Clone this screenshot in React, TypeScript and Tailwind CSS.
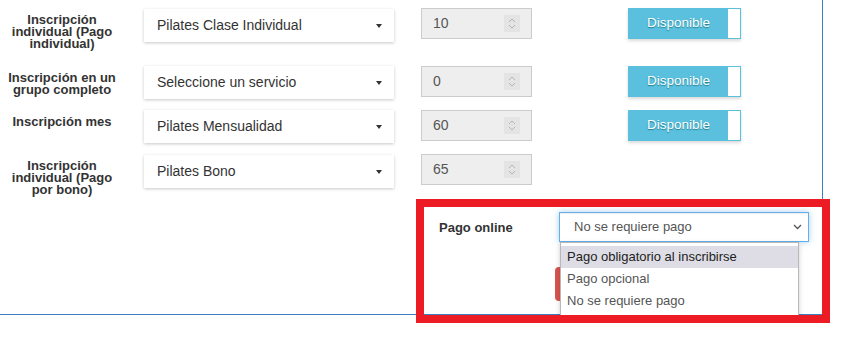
import React from "react";

interface ServiceRow {
    label: string[];
    service: string;
    price: string;
    available: boolean;
    rowClass: string;
    selectClass: string;
}

const rows: ServiceRow[] = [
    {
        label: ["Inscripción", "individual (Pago", "individual)"],
        service: "Pilates Clase Individual",
        price: "10",
        available: true,
        rowClass: "h-[66px] pt-[8px]",
        selectClass: "mt-[1px]",
    },
    {
        label: ["Inscripción en un", "grupo completo"],
        service: "Seleccione un servicio",
        price: "0",
        available: true,
        rowClass: "h-[44px]",
        selectClass: "mt-0",
    },
    {
        label: ["Inscripción mes"],
        service: "Pilates Mensualidad",
        price: "60",
        available: true,
        rowClass: "h-[44px]",
        selectClass: "mt-0",
    },
    {
        label: ["Inscripción", "individual (Pago", "por bono)"],
        service: "Pilates Bono",
        price: "65",
        available: false,
        rowClass: "h-[58px]",
        selectClass: "mt-[1px]",
    },
];

const paymentOptions = [
    "Pago obligatorio al inscribirse",
    "Pago opcional",
    "No se requiere pago",
];

const Spinner = () => (
    <div className="flex h-[17px] w-[16px] items-center justify-center bg-[#e4e4e4]">
        <svg width="8" height="13" viewBox="0 0 8 13" fill="none" stroke="#b5b5b5" strokeWidth="1">
            <polyline points="1,5 4,2 7,5" />
            <polyline points="1,8 4,11 7,8" />
        </svg>
    </div>
);

const AvailabilityToggle: React.FC<{ on: boolean }> = ({ on }) => {
    if (!on) {
        return null;
    }
    return (
        <div className="ml-[96px] flex h-[31px] w-[113px] border border-[#5bc0de] bg-white shadow-[0_2px_3px_rgba(0,0,0,0.15)]">
            <div className="flex w-[99px] items-center justify-center bg-[#5bc0de] text-[13.5px] text-white [text-shadow:0_1px_1px_rgba(20,110,130,0.8)]">
                Disponible
            </div>
            <div className="flex-1 bg-white" />
        </div>
    );
};

export default function App() {
    return (
        <div className="relative h-[339px] w-[844px] bg-white font-['Liberation_Sans',Arial,sans-serif] text-[#333]">
            <div className="relative h-[315px] w-[823px] border-b border-r border-[#3a7fc0]">
                {rows.map((row) => (
                    <div key={row.service} className={`flex items-start ${row.rowClass}`}>
                        <div className="w-[124px] pt-[6px] text-center text-[13px] font-bold leading-[12px] text-[#333]">
                            {row.label.map((line) => (
                                <div key={line}>{line}</div>
                            ))}
                        </div>
                        <div
                            className={`ml-[20px] flex h-[33px] w-[250px] items-center justify-between bg-white pl-[13px] pr-[12px] text-[14px] text-[#333] shadow-[0_1px_3px_rgba(0,0,0,0.22)] ${row.selectClass}`}
                        >
                            <span>{row.service}</span>
                            <span className="border-x-[3.5px] border-t-[4px] border-x-transparent border-t-[#333]" />
                        </div>
                        <div className="ml-[27px] flex h-[31px] w-[111px] items-center justify-between border border-[#cccccc] bg-[#eeeeee] pl-[11px] pr-[11px] text-[14px] text-[#555]">
                            <span>{row.price}</span>
                            <Spinner />
                        </div>
                        <AvailabilityToggle on={row.available} />
                    </div>
                ))}

                <div className="flex items-start pl-[439px]">
                    <div className="w-[120px] pt-[6px] text-[13px] font-bold text-[#333]">
                        Pago online
                    </div>
                    <div className="relative">
                        <div className="flex h-[30px] w-[250px] items-center justify-between border border-[#66afe9] bg-white pl-[14px] pr-[6px] text-[13px] text-[#555] shadow-[inset_0_1px_1px_rgba(0,0,0,0.075),0_0_6px_rgba(102,175,233,0.6)]">
                            <span>No se requiere pago</span>
                            <svg width="9" height="6" viewBox="0 0 9 6" fill="none" stroke="#555" strokeWidth="1.3">
                                <polyline points="1,1 4.5,4.5 8,1" />
                            </svg>
                        </div>
                        <div className="ml-[-4px] mt-[25px] h-[34px] w-[90px] rounded-sm bg-[#d9534f]" />
                        <div className="absolute left-[1px] top-[30px] z-10 h-[74px] w-[239px] border border-[#b8b8b8] bg-white pt-[3px] text-[13px] shadow-[0_2px_5px_rgba(0,0,0,0.2)]">
                            {paymentOptions.map((opt, i) => (
                                <div
                                    key={opt}
                                    className={
                                        i === 0
                                            ? "flex h-[22px] items-center bg-[#dedde5] pl-[6px] text-[#222]"
                                            : "flex h-[22px] items-center pl-[6px] text-[#555]"
                                    }
                                >
                                    {opt}
                                </div>
                            ))}
                        </div>
                    </div>
                </div>
            </div>

            <div className="pointer-events-none absolute left-[416px] top-[199px] z-20 h-[124px] w-[414px] border-[8px] border-[#ed1c24]" />
        </div>
    );
}
